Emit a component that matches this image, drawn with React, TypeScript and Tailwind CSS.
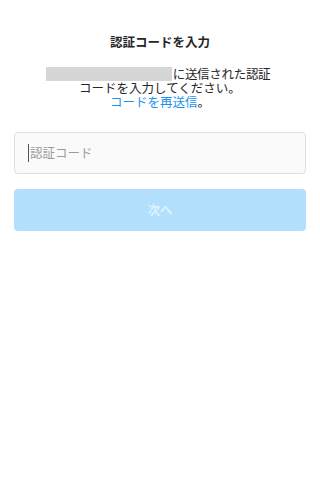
import React from "react";

export default function App() {
  return (
    <div
      className="w-[320px] h-[492px] bg-white flex flex-col items-center"
      style={{ fontFamily: '"Noto Sans CJK JP", "Noto Sans", sans-serif' }}
    >
      <div className="mt-[34px] h-[16px] text-[12.5px] leading-[16px] font-bold text-[#262626]">
        認証コードを入力
      </div>
      <div className="mt-[17px] flex flex-col items-center text-[12.5px] leading-[14px] text-[#262626]">
        <div className="flex items-center h-[14px] pr-[4px]">
          <span className="inline-block w-[126px] h-[14px] bg-[#d6d6d6] mr-[1px]" />
          <span className="tracking-[-0.3px]">に送信された認証</span>
        </div>
        <div className="h-[14px]">コードを入力してください。</div>
        <div className="h-[14px]">
          <span className="text-[#1a93f0]">コードを再送信</span>
          <span>。</span>
        </div>
      </div>
      <div className="mt-[23px] w-[292px] h-[42px] rounded-[4px] border border-[#e0e0e0] bg-[#fafafa] flex items-center pl-[13px]">
        <span className="w-px h-[18px] bg-[#555555]" />
        <span className="text-[12.5px] text-[#9a9a9a] ml-[1px]">認証コード</span>
      </div>
      <div className="mt-[15px] w-[292px] h-[42px] rounded-[4px] bg-[#b2dffc] flex items-center justify-center">
        <span className="text-[12.5px] font-bold text-white/60">次へ</span>
      </div>
    </div>
  );
}
